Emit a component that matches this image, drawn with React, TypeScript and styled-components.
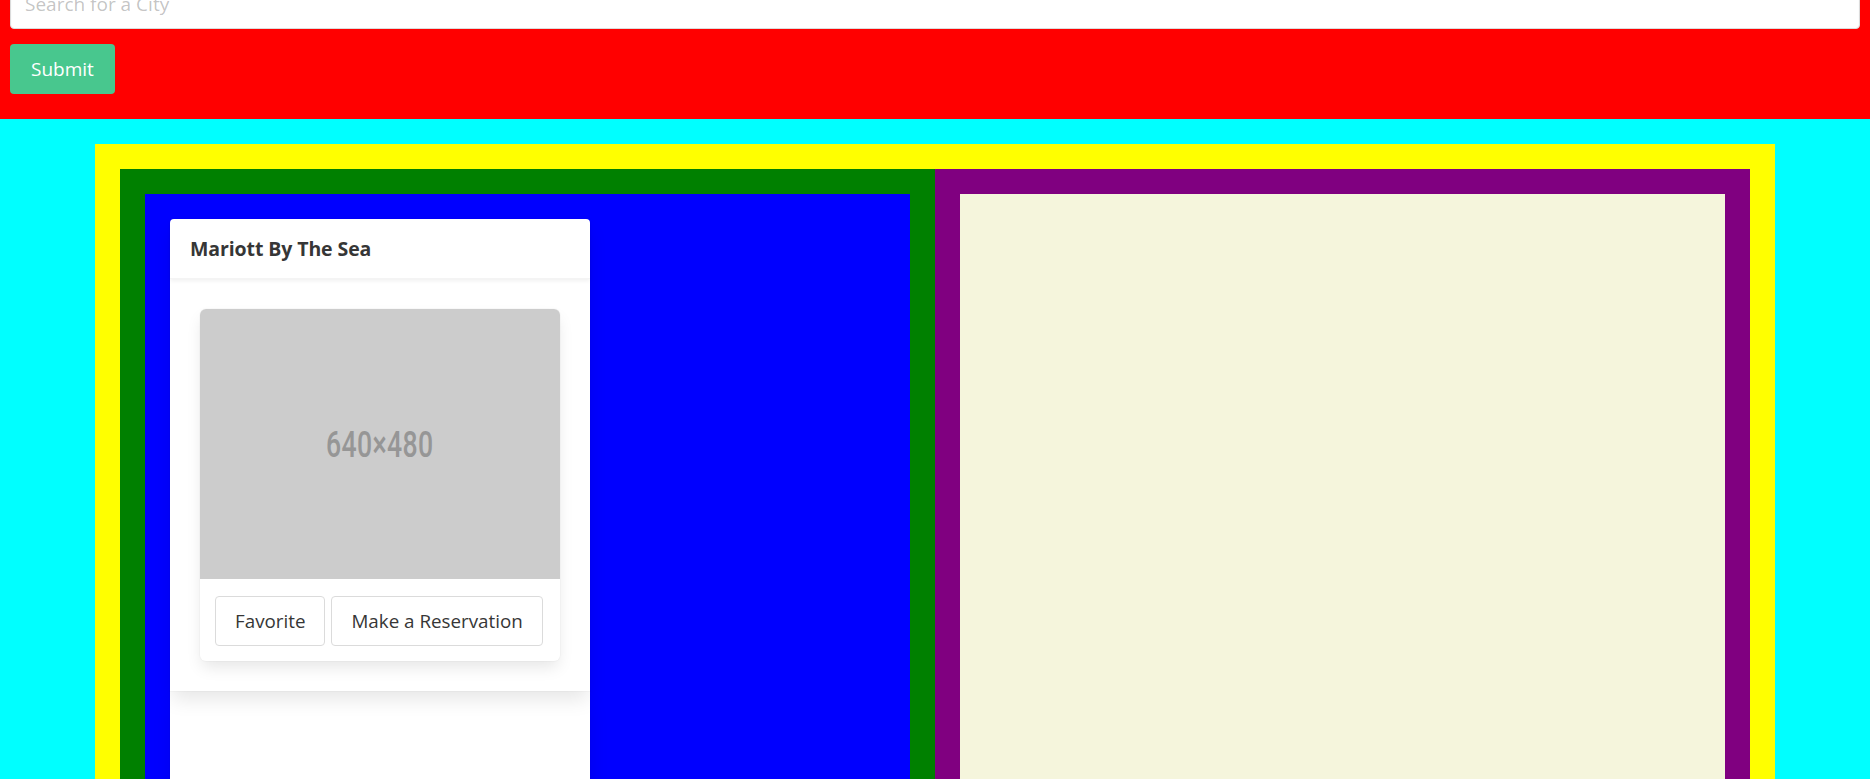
import React from "react";
import styled, { createGlobalStyle } from "styled-components";

const GlobalStyle = createGlobalStyle`
  html, body {
    margin: 0;
    padding: 0;
    overflow: hidden;
    background: #00ffff;
  }
  body {
    font-family: "Open Sans", "Noto Sans", "Liberation Sans", sans-serif;
    color: #363636;
  }
  *, *::before, *::after { box-sizing: border-box; }
`;

const SearchBar = styled.header`
  background: #ff0000;
  margin-top: -21px;
  padding: 0 10px 25px;
  display: flex;
  flex-direction: column;
  align-items: flex-start;
  gap: 15px;
`;

const SearchInput = styled.input`
  width: 100%;
  height: 50px;
  font-family: inherit;
  font-size: 19px;
  color: #363636;
  background: #fff;
  border: 1px solid #dbdbdb;
  border-radius: 4px;
  padding: 0 14px;
  box-shadow: inset 0 1px 2px rgba(10, 10, 10, 0.05);
  outline: none;
  &::placeholder { color: rgba(54, 54, 54, 0.3); }
`;

const SubmitButton = styled.button`
  height: 50px;
  padding: 0 20px;
  font-family: inherit;
  font-size: 19px;
  color: #fff;
  background: #48c78e;
  border: 1px solid transparent;
  border-radius: 4px;
  cursor: pointer;
`;

const Stage = styled.main`
  background: #00ffff;
  padding: 25px 0;
`;

const Frame = styled.section`
  width: 1680px;
  max-width: 90%;
  margin: 0 auto;
  background: #ffff00;
  padding: 25px;
  display: grid;
  grid-template-columns: 1fr 1fr;
`;

const Pane = styled.div<{ $bg: string }>`
  background: ${(p) => p.$bg};
  padding: 25px;
`;

const ListArea = styled.div`
  background: #0000ff;
  padding: 25px;
  min-height: 900px;
  display: flex;
  flex-direction: column;
  align-items: flex-start;
`;

const MapArea = styled.div`
  background: #f5f5dc;
  min-height: 900px;
`;

const Card = styled.article<{ $raised?: boolean }>`
  width: 420px;
  background: #fff;
  border-radius: ${(p) => (p.$raised ? "4px 4px 0 0" : "0")};
  box-shadow: 0 10px 20px -2.5px rgba(10, 10, 10, 0.1), 0 0 0 1px rgba(10, 10, 10, 0.02);
  position: relative;
  z-index: ${(p) => (p.$raised ? 1 : 0)};
`;

const CardHeader = styled.header`
  padding: 18px 20px 17px;
  box-shadow: 0 2px 4px rgba(10, 10, 10, 0.06);
  border-bottom: 1px solid #f4f4f4;
`;

const CardTitle = styled.h2`
  margin: 0;
  font-size: 19.5px;
  line-height: 24px;
  font-weight: 700;
  letter-spacing: -0.1px;
  color: #363636;
`;

const CardBody = styled.div`
  padding: 30px;
`;

const EmptyBody = styled.div`
  height: 300px;
`;

const InnerCard = styled.div`
  background: #fff;
  border-radius: 6px;
  box-shadow: 0 8px 16px -2px rgba(10, 10, 10, 0.1), 0 0 0 1px rgba(10, 10, 10, 0.02);
`;

const Placeholder = styled.div`
  height: 270px;
  background: #cccccc;
  border-radius: 6px 6px 0 0;
  display: flex;
  align-items: center;
  justify-content: center;
`;

const PlaceholderText = styled.span`
  font-family: "Roboto", "Liberation Sans", sans-serif;
  font-size: 37px;
  font-weight: 500;
  color: #969696;
  display: inline-block;
  transform: scaleX(0.72);
  letter-spacing: 0.5px;
`;

const CardActions = styled.div`
  padding: 17px 15px 15px;
  display: flex;
  gap: 6px;
`;

const ActionButton = styled.button`
  height: 50px;
  padding: 0 19px;
  font-family: inherit;
  font-size: 18.8px;
  color: #363636;
  background: #fff;
  border: 1px solid #dbdbdb;
  border-radius: 4px;
  cursor: pointer;
  white-space: nowrap;
`;

type Hotel = { name: string; size: string };

const HotelCard: React.FC<{ hotel: Hotel }> = ({ hotel }) => (
  <Card $raised>
    <CardHeader>
      <CardTitle>{hotel.name}</CardTitle>
    </CardHeader>
    <CardBody>
      <InnerCard>
        <Placeholder>
          <PlaceholderText>{hotel.size}</PlaceholderText>
        </Placeholder>
        <CardActions>
          <ActionButton>Favorite</ActionButton>
          <ActionButton>Make a Reservation</ActionButton>
        </CardActions>
      </InnerCard>
    </CardBody>
  </Card>
);

export default function App() {
  const hotels: Hotel[] = [{ name: "Mariott By The Sea", size: "640×480" }];
  return (
    <>
      <GlobalStyle />
      <SearchBar>
        <SearchInput placeholder="Search for a City" />
        <SubmitButton>Submit</SubmitButton>
      </SearchBar>
      <Stage>
        <Frame>
          <Pane $bg="#008000">
            <ListArea>
              {hotels.map((h) => (
                <HotelCard key={h.name} hotel={h} />
              ))}
              <Card>
                <EmptyBody />
              </Card>
            </ListArea>
          </Pane>
          <Pane $bg="#800080">
            <MapArea />
          </Pane>
        </Frame>
      </Stage>
    </>
  );
}
